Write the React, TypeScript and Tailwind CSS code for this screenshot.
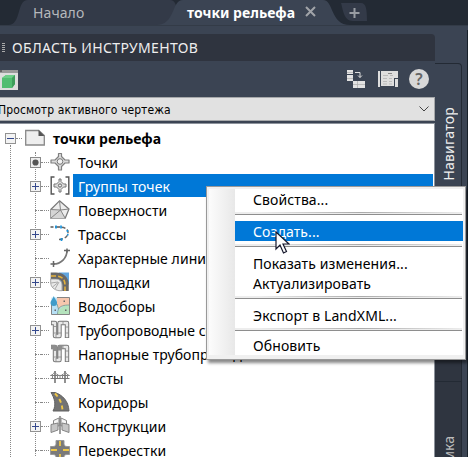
import React from "react";

type RowProps = {
  label: string;
  icon: React.ReactNode;
  mark?: "plus" | "dot";
  selected?: boolean;
};

function PlusBox({ minus = false }: { minus?: boolean }) {
  return (
    <svg width="11" height="11" viewBox="0 0 11 11" className="shrink-0" shapeRendering="crispEdges">
      <rect x=".5" y=".5" width="10" height="10" fill="#f3f3f3" stroke="#929292" />
      <path d="M2 5.5h7" stroke="#34488c" />
      {!minus && <path d="M5.5 2v7" stroke="#34488c" />}
    </svg>
  );
}

function DotBox() {
  return (
    <svg width="11" height="11" viewBox="0 0 11 11" className="shrink-0">
      <rect x=".5" y=".5" width="10" height="10" fill="#eee" stroke="#8a8a8a" />
      <circle cx="5.5" cy="5.5" r="3.1" fill="#555" />
    </svg>
  );
}

function Icon({ children }: { children: React.ReactNode }) {
  return (
    <svg width="20" height="20" viewBox="0 0 20 20" fill="none" className="shrink-0">
      {children}
    </svg>
  );
}

const PointsIcon = (
  <Icon>
    <path d="M8.500 1.500h3v3L15 8h4v3h-4l-3.500 3.500v3.500h-3v-3.500L5 11H1V8h4l3.500-3.500z" fill="#dcdcdc" stroke="#808080" strokeWidth="1.200" strokeLinejoin="round" />
    <circle cx="10" cy="9.500" r="2.800" fill="#f2f2f2" stroke="#777" />
  </Icon>
);

const GroupIcon = (
  <Icon>
    <path d="M4.500 1H1.200v17h3.300M15.500 1h3.300v17h-3.300" stroke="#555" strokeWidth="1.400" />
    <path d="M9 3h2v2.500l2.500 2.500H16v3h-2.500L11 13.500V16H9v-2.500L6.500 11H4V8h2.500L9 5.500z" fill="#dedede" stroke="#777" />
    <circle cx="10" cy="9.500" r="1.600" fill="#eee" stroke="#666" />
  </Icon>
);

const SurfaceIcon = (
  <Icon>
    <path d="M9.500 .8 .8 9.500v8.700h14.400L19 9z" fill="#ededed" stroke="#777" strokeWidth="1.200" strokeLinejoin="round" />
    <path d="M.8 9.500V18.200h14.400L10.500 10z" fill="#d5d5d5" />
    <path d="M9.500 .8 10.500 10 .8 18.200M15.200 18.200 10.500 10 19 9M.8 9.500l9.700.5" stroke="#858585" />
  </Icon>
);

const AlignIcon = (
  <Icon>
    <path d="M.5 3h3M5 3h5" stroke="#555" strokeWidth="1.300" />
    <path d="M11.500 3.200c4.500.3 6.500 2.800 6.500 5.300 0 4-3 7-11 7" stroke="#666" strokeWidth="1.400" strokeDasharray="4 2" />
    <path d="M6 1.500v3M11 1.500v3M17.500 6v2M17 10.500l1.500.5M11.500 14v3" stroke="#1993dc" strokeWidth="1.700" />
  </Icon>
);

const LineIcon = (
  <Icon>
    <path d="M3.500 16C11 16 17 10 17 2.500" stroke="#777" strokeWidth="1.700" />
    <path d="M3.500 13v6M.5 16H5M14 2.500h6M17 .5v4" stroke="#666" strokeWidth="1.500" />
  </Icon>
);

const SiteIcon = (
  <Icon>
    <path d="M9 .5h10v12H9z" fill="#60a5df" />
    <path d="M.7 3.800H6c5.500 0 9.500 3.500 9.500 9V19" stroke="#686868" strokeWidth="6.500" />
    <path d="M.7 7h5c4 0 6.300 2.500 6.300 6v5.700H9C4 18 1 15 .7 11z" fill="#e9e9e9" stroke="#929292" strokeWidth=".8" />
    <path d="M2.500 15 8 10.500M5 17l4-7M1 11l7-1" stroke="#aaa" />
    <path d="M1 4h5c6 0 9 3.500 9 9v6" stroke="#e5b33c" strokeWidth="1.500" strokeDasharray="5 2" />
  </Icon>
);

const BasinIcon = (
  <Icon>
    <rect x="1.500" y="1.500" width="18" height="17" fill="#b7e0f6" />
    <path d="M7 1.500h12.500V9C14 9 10 11 8.500 13L7 8z" fill="#f6c7ae" />
    <path d="M19.500 9C13 9 8 13 7.500 18.500h12z" fill="#b5e3bd" />
    <path d="M7 8l1.500 5M8.500 13C10 10 14 9 19.500 9M7.500 18.500C7.500 16 8 14.500 8.500 13" stroke="#77978b" strokeWidth=".8" />
    <path d="M1.500 7v11.500h18v-17H7" stroke="#858585" />
    <path d="M3.800 0C3 3 .5 4.500.5 6.800a3.300 3.300 0 0 0 6.600 0C7.100 4.500 4.600 3 3.800 0z" fill="#3f9bc9" />
    <path d="M13.500 4.500h1.500V6h-1.500zM15 13.500h1.500V15H15zM4.500 13.500H6V15H4.500z" fill="#666" />
  </Icon>
);

function PipeIcon({ pressure = false }: { pressure?: boolean }) {
  return (
    <Icon>
      <path d="M1 3h4v13h4.500V3H17v15" stroke="#777" strokeWidth="4.400" strokeLinejoin="round" />
      <path d="M1.800 3H5v13h4.500V3H17v14.200" stroke="#e8e8e8" strokeWidth="2.400" strokeLinejoin="round" />
      {pressure && <path d="M1 3h4v3.500M9.500 6.500V3h3" stroke="#8d8d8d" strokeWidth="3.400" />}
      <path d="M3 13h4M7.500 13h4M13 1v4M15 7h4M15 13h4M3 6.500h4M6 14v4" stroke="#888" strokeWidth=".8" />
    </Icon>
  );
}

const BridgeIcon = (
  <Icon>
    <path d="M.5 7.500h19M.5 10.500h19" stroke="#777" strokeWidth="1.100" />
    <path d="M5 3v12M15 3v12" stroke="#777" strokeWidth="1.600" />
    <path d="M.5 7.500C3 7 4 5 5 3.500c1 3 3 4 5 4s4-1 5-4c1 1.500 2 3.500 4.500 4M2.500 6v4M7.500 6v4M10 7v3M12.500 6v4M17.500 6v4" stroke="#888" />
  </Icon>
);

const RoadIcon = (
  <Icon>
    <path d="M1 .5h4C12.500 3 18.500 9 19 19H3C6.500 13 4.500 6 1 .5z" fill="#737373" stroke="#616161" />
    <path d="M5 1.500c4 4 7 9 7.500 17" stroke="#efc646" strokeWidth="1.900" strokeDasharray="4 3" />
  </Icon>
);

const AssemblyIcon = (
  <Icon>
    <path d="M3.500 9V4.500L9 2v8zM16.500 9V4.500L11 2v8z" fill="#f5f5f5" stroke="#858585" />
    <path d="M1 8.500 8 7v7l-7 2.500zM19 8.500 12 7v7l7 2.500z" fill="#c6c6c6" stroke="#858585" />
    <path d="M10 0v18" stroke="#777" strokeWidth="1.400" />
  </Icon>
);

const CrossroadIcon = (
  <Icon>
    <path d="M6 .5h8v3c0 2 1 3 3 3h2.500v8H17c-2 0-3 1-3 3v3H6v-3c0-2-1-3-3-3H.5v-8H3c2 0 3-1 3-3z" fill="#7a7a7a" stroke="#999" />
    <path d="M10 1v5M10 14v5M1 10h6M13 10h6" stroke="#efc746" strokeWidth="1.800" />
  </Icon>
);

const rows: RowProps[] = [
  { label: "Точки", icon: PointsIcon, mark: "dot" },
  { label: "Группы точек", icon: GroupIcon, mark: "plus", selected: true },
  { label: "Поверхности", icon: SurfaceIcon },
  { label: "Трассы", icon: AlignIcon, mark: "plus" },
  { label: "Характерные линии", icon: LineIcon },
  { label: "Площадки", icon: SiteIcon, mark: "plus" },
  { label: "Водосборы", icon: BasinIcon },
  { label: "Трубопроводные сети", icon: <PipeIcon />, mark: "plus" },
  { label: "Напорные трубопроводы", icon: <PipeIcon pressure /> },
  { label: "Мосты", icon: BridgeIcon },
  { label: "Коридоры", icon: RoadIcon },
  { label: "Конструкции", icon: AssemblyIcon, mark: "plus" },
  { label: "Перекрестки", icon: CrossroadIcon },
];

function TreeRow({ label, icon, mark, selected }: RowProps) {
  return (
    <div className="flex h-6 items-center">
      <div className="flex w-[50px] shrink-0 items-center pl-[30px] pr-px">
        {mark === "plus" && <PlusBox />}
        {mark === "dot" && <DotBox />}
        {!mark && <div className="ml-[5px] h-px w-[6px] border-t border-dotted border-[#888]" />}
        <div className="h-px flex-1 border-t border-dotted border-[#888]" />
      </div>
      {icon}
      <div className={`ml-[3px] flex min-w-0 flex-1 items-center whitespace-nowrap pl-[5px] pt-[2px] tracking-[0.07px] ${selected ? "mb-px h-[23px] bg-[#0078d7] text-white" : "h-6"}`}>
        {label}
      </div>
    </div>
  );
}

function Separator() {
  return (
    <div className="mr-px h-[3px] border-b border-[#8e8e8e] bg-[#ededed]">
      <div className="ml-6 h-px bg-gradient-to-r from-[#ededed] via-[#aaa] to-[#ededed]" />
    </div>
  );
}

function MenuItem({ label, className }: { label: string; className: string }) {
  return <div className={`flex items-center pl-[18px] tracking-[0.1px] ${className}`}>{label}</div>;
}

function ContextMenu() {
  return (
    <div className="absolute left-[206px] top-[186px] flex h-[174px] w-[260px] border border-[#999] bg-[#f0f0f0] p-[2px] pb-[4px] shadow-[2px_3px_3px_#0007]">
      <div className="w-[26px] shrink-0 bg-gradient-to-r from-[#fcfcfc] to-[#e8e8e8]" />
      <div className="flex flex-1 flex-col bg-white">
        <MenuItem label="Свойства..." className="h-[23px] pb-[2px]" />
        <Separator />
        <MenuItem label="Создать..." className="mt-[6px] h-5 bg-[#0078d7] pt-[2px] text-white" />
        <div className="mt-[3px]"><Separator /></div>
        <MenuItem label="Показать изменения..." className="mt-[6px] h-5 pt-[2px]" />
        <MenuItem label="Актуализировать" className="h-5 pt-[2px]" />
        <div className="mt-[3px]"><Separator /></div>
        <MenuItem label="Экспорт в LandXML..." className="mt-[6px] h-5 pt-[2px]" />
        <div className="mt-[3px]"><Separator /></div>
        <MenuItem label="Обновить" className="mt-[4px] h-5 pt-[2px]" />
      </div>
    </div>
  );
}

function TabBar() {
  return (
    <div className="relative flex h-[25px] bg-[#232a34]">
      <svg className="absolute left-0 top-0" width="468" height="25" viewBox="0 0 468 25">
        <path d="M8 25C22 25 16 0 28 0H170c10 0 9 25-4 25z" fill="#333a48" />
        <path d="M156 25c20 0 15-25 27-25H323c11 0 7 25 27 25z" fill="#3b4453" />
        <path d="M341 3h20c5 0 6 6 6 18h-14C344 21 343 10 341 3z" fill="#333a48" />
        <path d="M349.500 13h10M354.500 8v10" stroke="#999da3" strokeWidth="2" />
      </svg>
      <div className="relative flex h-[25px] w-[187px] items-center pl-[33px] pt-px tracking-[0.1px] text-[#b6b8bc]">Начало</div>
      <div className="relative flex h-[25px] w-[118px] items-center font-bold text-white">точки рельефа</div>
      <svg className="relative mt-[6px]" width="12" height="12" viewBox="0 0 12 12">
        <path d="m1 1 9 9m0-9-9 9" stroke="#a1a4a9" strokeWidth="2" />
      </svg>
    </div>
  );
}

function Toolbar() {
  return (
    <div className="flex h-9 items-center">
      <svg width="18" height="20" viewBox="0 0 18 20" className="mt-px">
        <path d="M0 0h18v20H0z" fill="#ddd" />
        <path d="M0 0h18v3H0z" fill="#999" />
        <path d="M0 1h2" stroke="#333" />
        <path d="m2 8 4-3h9v9l-3 4H2z" fill="#52bd71" />
        <path d="m2 8 4-3h9l-3 3z" fill="#6dce88" />
        <path d="m12 8 3-3v9l-3 4z" fill="#3e9e5b" />
      </svg>
      <svg width="18" height="18" viewBox="0 0 18 18" className="ml-[329px]">
        <path d="M0 0h6v4H0zM0 5h6v6H0zM6 11h12v7H6z" fill="#e2e2e2" />
        <path d="M0 2.500h6M0 8.500h6M6 14.500h12M10.500 11v7" stroke="#aaa" strokeWidth=".7" />
        <path d="M8 2.500h5v5m-2-2 2 2 2-2" stroke="#ddd" fill="none" />
      </svg>
      <svg width="20" height="16" viewBox="0 0 20 16" className="ml-[13px]">
        <path d="M0 0h2v16H0zM3 0h17v7h-4v8H3zM17 8h3v8h-3z" fill="#dedede" />
        <path d="M5 4.500h5m2 0h3M5 7.500h4m2 0h3M5 10.500h4m2 0h3M5 13h4m2 0h3" stroke="#bbb" />
        <path d="M10 2.500h4" stroke="#888" />
      </svg>
      <div className="ml-[11px] flex size-5 items-center justify-center rounded-full bg-[#d8d8d8] text-[16px] font-semibold leading-none text-[#666]">?</div>
    </div>
  );
}

export default function App() {
  return (
    <div className="relative h-[457px] w-[468px] overflow-hidden bg-[#3b4453] font-['Noto_Sans','Open_Sans',sans-serif] text-[14px] leading-5 text-black">
      <TabBar />
      <div className="flex h-[432px] border-t border-[#333b47] pt-2">
        <div className="flex w-[435px] shrink-0 flex-col">
          <div className="flex h-[27px] items-center rounded-tr bg-[#2f343f] pl-[2px] text-[14px] text-[#eee]">
            <div className="h-[9px] w-[3px] bg-[repeating-linear-gradient(#aaa_0_1px,transparent_1px_2px)]" />
            <span className="ml-[7px] tracking-[0.35px]">ОБЛАСТЬ ИНСТРУМЕНТОВ</span>
          </div>
          <Toolbar />
          <div className="flex h-6 items-center justify-between border border-l-0 border-[#a6a8aa] bg-[#e1e1e1] pr-[5px] font-['DejaVu_Sans_Condensed','DejaVu_Sans',sans-serif] text-[12px] tracking-[0.1px]">
            <span className="-ml-[2px] pt-px">Просмотр активного чертежа</span>
            <svg width="10" height="6" viewBox="0 0 10 6"><path d="m.5.5 4.500 4.500L9.500.5" fill="none" stroke="#444" /></svg>
          </div>
          <div className="relative mt-[2px] h-[334px] overflow-hidden border-r border-t border-[#8c929b] bg-white pr-[1px] pt-[2px]">
            <div className="absolute left-[10px] top-[21px] h-[320px] border-l border-dotted border-[#888]" />
            <div className="absolute left-[35px] top-[28px] h-[310px] border-l border-dotted border-[#888]" />
            <div className="relative">
              <div className="flex h-6 items-center pl-[5px]">
                <PlusBox minus />
                <div className="mr-[3px] w-[6px] border-t border-dotted border-[#888]" />
                <svg width="20" height="18" viewBox="0 0 20 18">
                  <path d="M.7 1.500h13l5.600 5v9.500H.7z" fill="#eee" stroke="#888" strokeWidth="1.300" />
                  <path d="M13.500 1 19.500 7h-6z" fill="#555" />
                </svg>
                <span className="ml-2 whitespace-nowrap pt-[2px] font-bold">точки рельефа</span>
              </div>
              {rows.map((row) => <TreeRow key={row.label} {...row} />)}
            </div>
          </div>
        </div>
        <div className="mt-[29px] flex w-[27px] flex-col rounded-tr border-r border-t border-[#232a34] text-[14px]">
          <div className="flex h-[123px] items-end pb-[6px] pl-1 text-[#eee]">
            <span className="rotate-180 whitespace-nowrap tracking-[0.2px] [writing-mode:vertical-rl]">Навигатор</span>
          </div>
          <div className="mt-[34px] h-[163px] border-b border-[#232a34] bg-[#2f3540]" />
          <div className="flex h-[75px] flex-col items-start bg-[#2f3540] pl-1 pt-[54px] text-[#bbb]">
            <span className="rotate-180 whitespace-nowrap [writing-mode:vertical-rl]">Съемка</span>
          </div>
        </div>
        <div className="ml-auto -mt-1 w-px bg-[#18212a]" />
      </div>
      <ContextMenu />
      <svg className="absolute left-[275px] top-[231px]" width="15" height="24" viewBox="0 0 15 24">
        <path d="M1 1v17l4-4 3.500 8 3-1.500L8 13h6z" fill="white" stroke="#15172b" strokeWidth="1.200" />
      </svg>
    </div>
  );
}
